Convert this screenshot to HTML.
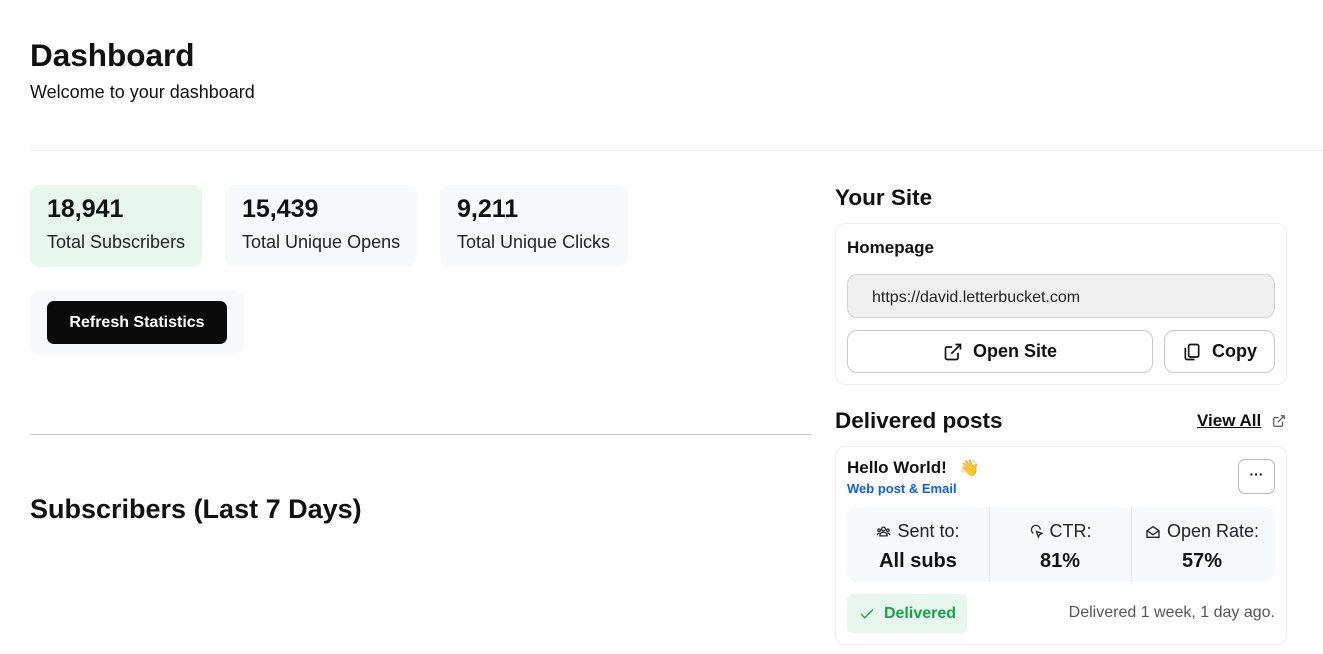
<!DOCTYPE html>
<html><head><meta charset="utf-8"><style>
*{box-sizing:border-box;margin:0;padding:0}
body{width:1323px;height:654px;background:#fff;font-family:"Liberation Sans",sans-serif;color:#111;position:relative;overflow:hidden}
.a{position:absolute}
.card{position:absolute;border-radius:10px}
.num{position:absolute;left:17px;top:10px;font-size:25px;font-weight:bold}
.lbl{position:absolute;left:17px;top:47px;font-size:18px;color:#222}
.btn{position:absolute;border:1px solid #c8c8c8;border-radius:10px;background:#fff;display:flex;align-items:center;justify-content:center;font-weight:bold;font-size:18px;gap:10px}
.cell{position:absolute;top:0;height:75px;text-align:center;width:142px}
.cell .l{font-size:18px;margin-top:14px;color:#222;display:flex;align-items:center;justify-content:center;gap:6px}
.cell .v{font-size:20px;font-weight:bold;margin-top:8px}
</style></head><body>
<div class="a" style="left:30px;top:37px;font-size:31.5px;font-weight:bold">Dashboard</div>
<div class="a" style="left:30px;top:82px;font-size:18px">Welcome to your dashboard</div>
<div class="a" style="left:30px;top:150px;width:1293px;height:1px;background:#eee"></div>

<div class="card" style="left:30px;top:185px;width:172px;height:82px;background:#e8f7ee"><div class="num">18,941</div><div class="lbl">Total Subscribers</div></div>
<div class="card" style="left:225px;top:185px;width:192px;height:82px;background:#f8f9fb"><div class="num">15,439</div><div class="lbl">Total Unique Opens</div></div>
<div class="card" style="left:440px;top:185px;width:188px;height:82px;background:#f8f9fb"><div class="num">9,211</div><div class="lbl">Total Unique Clicks</div></div>

<div class="card" style="left:30px;top:290px;width:214px;height:65px;background:#f8f9fb"></div>
<div class="a" style="left:47px;top:301px;width:180px;height:43px;background:#0a0a0a;border-radius:7px;color:#fff;font-weight:bold;font-size:16px;display:flex;align-items:center;justify-content:center">Refresh Statistics</div>

<div class="a" style="left:30px;top:434px;width:782px;height:1px;background:#ccc"></div>
<div class="a" style="left:30px;top:494px;font-size:27px;font-weight:bold">Subscribers (Last 7 Days)</div>

<div class="a" style="left:835px;top:185px;font-size:22.5px;font-weight:bold">Your Site</div>
<div class="card" style="left:835px;top:223px;width:452px;height:162px;border:1px solid #eee"></div>
<div class="a" style="left:847px;top:238px;font-size:17px;font-weight:bold">Homepage</div>
<div class="a" style="left:847px;top:274px;width:428px;height:44px;background:#f0f0f0;border:1px solid #d0d0d0;border-radius:10px;font-size:16px;padding:14px 0 0 24px;color:#222">https://david.letterbucket.com</div>
<div class="btn" style="left:847px;top:330px;width:306px;height:43px"><svg width="20" height="20" viewBox="0 0 24 24" fill="none" stroke="#111" stroke-width="2"><path d="M18 13v6a2 2 0 0 1-2 2H5a2 2 0 0 1-2-2V8a2 2 0 0 1 2-2h6M15 3h6v6M10 14L21 3"/></svg>Open Site</div>
<div class="btn" style="left:1164px;top:330px;width:111px;height:43px"><svg width="20" height="20" viewBox="0 0 24 24" fill="none" stroke="#111" stroke-width="2"><rect x="8" y="3" width="12" height="15" rx="2"/><path d="M4 7v12a2 2 0 0 0 2 2h9"/></svg>Copy</div>

<div class="a" style="left:835px;top:408px;font-size:22.5px;font-weight:bold">Delivered posts</div>
<div class="a" style="left:1197px;top:411px;font-size:17px;font-weight:bold;text-decoration:underline">View All</div>
<svg class="a" style="left:1272px;top:414px" width="14" height="14" viewBox="0 0 24 24" fill="none" stroke="#555" stroke-width="2"><path d="M18 13v6a2 2 0 0 1-2 2H5a2 2 0 0 1-2-2V8a2 2 0 0 1 2-2h6M15 3h6v6M10 14L21 3"/></svg>
<div class="card" style="left:835px;top:446px;width:452px;height:199px;border:1px solid #eee"></div>
<div class="a" style="left:847px;top:458px;font-size:17px;font-weight:bold">Hello World! <span style="font-size:16px;margin-left:8px">👋</span></div>
<div class="a" style="left:847px;top:481px;font-size:13px;font-weight:bold;color:#0a5cff">Web post &amp; Email</div>
<div class="a" style="left:1238px;top:459px;width:37px;height:35px;border:1px solid #bbb;border-radius:7px;text-align:center;font-size:14px;font-weight:bold;line-height:28px">···</div>
<div class="a" style="left:847px;top:507px;width:428px;height:75px;background:#f8f9fb;border-radius:10px">
 <div class="cell" style="left:0"><div class="l"><svg width="15" height="15" viewBox="0 0 24 24" fill="none" stroke="#222" stroke-width="2"><circle cx="12" cy="8" r="3"/><circle cx="5" cy="10" r="2"/><circle cx="19" cy="10" r="2"/><path d="M6 19a6 6 0 0 1 12 0zM2 18a3 3 0 0 1 4-3M22 18a3 3 0 0 0-4-3"/></svg>Sent to:</div><div class="v">All subs</div></div>
 <div class="a" style="left:142px;top:0;width:1px;height:75px;background:#e6e6e6"></div>
 <div class="cell" style="left:142px"><div class="l"><svg width="15" height="15" viewBox="0 0 24 24" fill="none" stroke="#222" stroke-width="2"><path d="M12 12l3 9 2-4 4-2z"/><path d="M7 15a7 7 0 1 1 11-6"/></svg>CTR:</div><div class="v">81%</div></div>
 <div class="a" style="left:284px;top:0;width:1px;height:75px;background:#e6e6e6"></div>
 <div class="cell" style="left:284px"><div class="l"><svg width="16" height="16" viewBox="0 0 24 24" fill="none" stroke="#222" stroke-width="2"><path d="M3 10l9-6 9 6v10H3z"/><path d="M3 10l9 6 9-6"/></svg>Open Rate:</div><div class="v">57%</div></div>
</div>
<div class="a" style="left:847px;top:594px;width:120px;height:39px;background:#e8f7ee;border-radius:5px;color:#16a34a;font-weight:bold;font-size:16px;display:flex;align-items:center;justify-content:center;gap:8px"><svg width="18" height="18" viewBox="0 0 24 24" fill="none" stroke="#16a34a" stroke-width="1.8"><path d="M4 12l5 5L20 6"/></svg>Delivered</div>
<div class="a" style="right:48px;top:604px;font-size:16px;color:#555">Delivered 1 week, 1 day ago.</div>
</body></html>
